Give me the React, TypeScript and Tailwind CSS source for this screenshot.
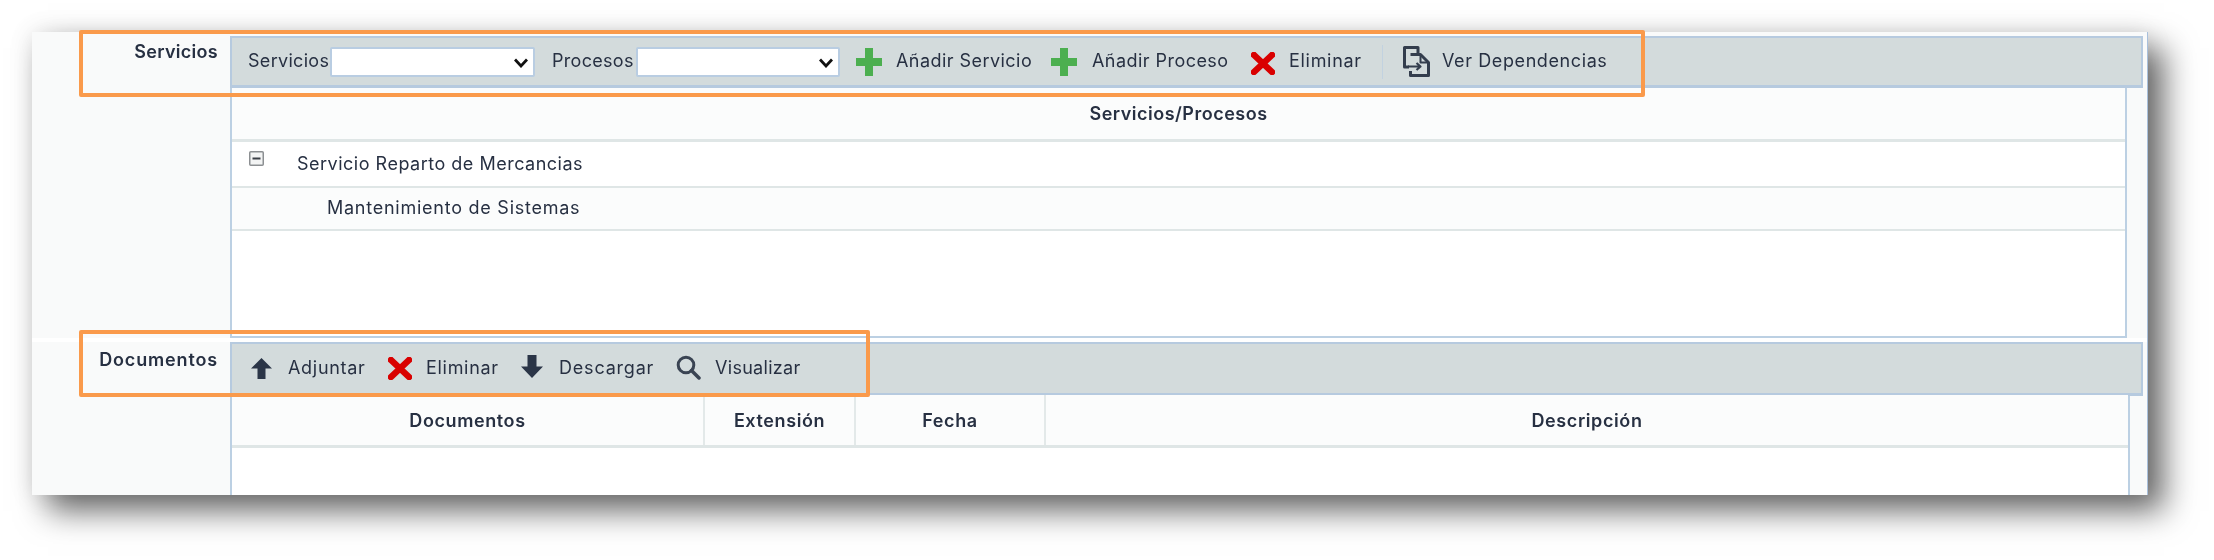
import React from 'react';

const Plus = () => (
  <svg width="26" height="28" viewBox="0 0 26 28" className="block">
    <path d="M9 0h8v10h9v8h-9v10H9V18H0v-8h9z" fill="#4caf50" />
  </svg>
);

const Cross = () => (
  <svg width="24" height="23" viewBox="0 0 24 23" className="block">
    <path d="M3 3l18 17M21 3L3 20" stroke="#d90000" strokeWidth="6.5" strokeLinecap="round" fill="none" />
  </svg>
);

const ArrowUp = () => (
  <svg width="21" height="21" viewBox="0 0 21 21" className="block">
    <path d="M10.5 0L21 10.5h-6.500V21h-8V10.500H0z" fill="#2a3547" />
  </svg>
);

const ArrowDown = () => (
  <svg width="22" height="23" viewBox="0 0 22 23" className="block">
    <path d="M6.500 0h9v11.500H22L11 23 0 11.500h6.500z" fill="#2a3547" />
  </svg>
);

const Magnifier = () => (
  <svg width="25" height="25" viewBox="0 0 25 25" className="block">
    <circle cx="10" cy="10" r="7.800" fill="none" stroke="#3a4453" strokeWidth="3" />
    <path d="M15.500 15.500L23 23" stroke="#3a4453" strokeWidth="3.500" strokeLinecap="round" />
  </svg>
);

const Dependencies = () => (
  <svg width="27" height="31" viewBox="0 0 27 31" className="block" fill="none" stroke="#333d4d" strokeWidth="3" strokeLinejoin="round">
    <path d="M6 21H1.500V1.500H15V7" />
    <path d="M7.500 8.500h10l8 8v13h-18V25" />
    <path d="M17.500 9v7.500h7.500" strokeWidth="2" />
    <path d="M5 20.500h12M13.500 17l4 3.500-4 3.500" strokeWidth="2.200" />
  </svg>
);

const Minus = () => (
  <svg width="15" height="15" viewBox="0 0 15 15" className="block">
    <rect x="0.750" y="0.750" width="13.500" height="13.500" rx="1" fill="#f3f4f4" stroke="#8c8f92" strokeWidth="1.500" />
    <path d="M3.500 7.500h8" stroke="#3a3f46" strokeWidth="2" />
  </svg>
);

const Chevron = () => (
  <svg width="14" height="10" viewBox="0 0 14 10" className="block" fill="none" stroke="#111" strokeWidth="2.800">
    <path d="M1 1.500l6 6.500 6-6.500" />
  </svg>
);

const SelectBox = ({ className }: { className: string }) => (
  <div className={`relative shrink-0 h-[30px] ${className}`}>
    <select className="w-full h-full appearance-none bg-white border-2 border-[#b9cde2] rounded-[2px]" />
    <div className="absolute right-[7px] top-[11px] pointer-events-none">
      <Chevron />
    </div>
  </div>
);

const ToolItem = ({ icon, label, className, labelClass }: { icon: React.ReactNode; label: string; className: string; labelClass: string }) => (
  <div className={`flex items-center shrink-0 ${className}`}>
    {icon}
    <span className={`whitespace-nowrap ${labelClass}`}>{label}</span>
  </div>
);

export default function App() {
  return (
    <div className="relative h-[560px] w-[2214px] bg-white overflow-hidden font-['Inter',sans-serif] text-[18px] tracking-[0.45px] text-[#273042] blur-[0.35px]">
      <div className="absolute left-8 top-8 w-[2116px] h-[463px] bg-white border-r border-[#a9c0dc] shadow-[16px_16px_30px_rgba(0,0,0,0.58),0_0_24px_rgba(0,0,0,0.1)] overflow-hidden flex flex-col">
        {/* Servicios */}
        <div className="flex h-[306px] shrink-0">
          <div className="w-[198px] shrink-0 bg-[#f9fafa] pt-2 pr-3 text-right font-semibold leading-6 tracking-[0.3px]">Servicios</div>
          <div className="flex-1 flex flex-col pt-1 bg-[#f9fafa] relative">
            <div className="h-[52px] w-[1913px] shrink-0 flex items-center bg-[#d3dbdc] border-2 border-[#b6cadf] border-b-[3px] pl-4">
              <span className="w-[82px] shrink-0 -mt-0.5 tracking-[0.3px]">Servicios</span>
              <SelectBox className="w-[205px]" />
              <span className="w-[84px] ml-[17px] shrink-0 -mt-0.5 tracking-[0.3px]">Procesos</span>
              <SelectBox className="w-[204px]" />
              <ToolItem icon={<Plus />} label="Añadir Servicio" className="w-[195px] ml-4" labelClass="ml-[14px] -mt-0.5" />
              <ToolItem icon={<Plus />} label="Añadir Proceso" className="w-[200px]" labelClass="ml-[15px] -mt-0.5" />
              <ToolItem icon={<Cross />} label="Eliminar" className="w-[131px] pt-1" labelClass="ml-[14px] -mt-[7px] tracking-[0.7px]" />
              <div className="w-px h-[34px] bg-[#c2d2e0] shrink-0" />
              <ToolItem icon={<Dependencies />} label="Ver Dependencias" className="ml-5" labelClass="ml-3 -mt-0.5 tracking-[0.6px]" />
            </div>
            <div className="w-[1897px] flex-1 bg-white border-x-2 border-b-2 border-[#bcd0e3] flex flex-col">
              <div className="h-[54px] shrink-0 flex items-center justify-center bg-[#fbfcfc] border-b-[3px] border-[#dfe6e6] font-semibold tracking-[0.5px]">Servicios/Procesos</div>
              <div className="h-[46px] shrink-0 flex bg-white border-b-2 border-[#dfe6e6]">
                <div className="ml-[17px] mt-[9px]">
                  <Minus />
                </div>
                <span className="ml-[33px] mt-[10px] leading-6 tracking-[0.5px]">Servicio Reparto de Mercancias</span>
              </div>
              <div className="h-[43px] shrink-0 flex items-center bg-[#fbfcfc] border-b-2 border-[#dfe6e6] pl-[95px] tracking-[0.75px] pb-0.5">Mantenimiento de Sistemas</div>
            </div>
          </div>
        </div>

        <div className="h-1 bg-white shrink-0" />

        {/* Documentos */}
        <div className="flex flex-1">
          <div className="w-[198px] shrink-0 bg-[#f9fafa] pt-1.5 pr-3 text-right font-semibold leading-6 tracking-[0.85px]">Documentos</div>
          <div className="flex-1 flex flex-col bg-[#f9fafa]">
            <div className="h-[54px] w-[1913px] shrink-0 flex items-center bg-[#d3dbdc] border-2 border-[#b6cadf] border-b-[3px] pl-[19px]">
              <ToolItem icon={<ArrowUp />} label="Adjuntar" className="w-[137px]" labelClass="ml-4 -mt-0.5 tracking-[0.7px]" />
              <ToolItem icon={<Cross />} label="Eliminar" className="w-[133px]" labelClass="ml-[14px] -mt-0.5 tracking-[0.7px]" />
              <ToolItem icon={<ArrowDown />} label="Descargar" className="w-[155px] -mt-1" labelClass="ml-4 mt-0.5 tracking-[0.8px]" />
              <ToolItem icon={<Magnifier />} label="Visualizar" className="-mt-0.5" labelClass="ml-[14px] tracking-[0.3px]" />
            </div>
            <div className="w-[1900px] flex-1 bg-white border-x-2 border-[#bcd0e3]">
              <div className="grid grid-cols-[473px_151px_190px_1fr] h-[53px] bg-[#fbfcfc] border-b-[3px] border-[#dfe6e6] font-semibold tracking-[0.6px] -mt-px">
                <div className="flex items-center justify-center border-r-2 border-[#e3e9e9]">Documentos</div>
                <div className="flex items-center justify-center border-r-2 border-[#e3e9e9]">Extensión</div>
                <div className="flex items-center justify-center border-r-2 border-[#e3e9e9]">Fecha</div>
                <div className="flex items-center justify-center">Descripción</div>
              </div>
            </div>
          </div>
        </div>
      </div>

      {/* Resaltado naranja */}
      <div className="absolute left-[79px] top-[30px] w-[1566px] h-[67px] border-4 border-[#fa9a4b] rounded-[2px] pointer-events-none" />
      <div className="absolute left-[79px] top-[330px] w-[791px] h-[67px] border-4 border-[#fa9a4b] rounded-[2px] pointer-events-none" />
    </div>
  );
}
